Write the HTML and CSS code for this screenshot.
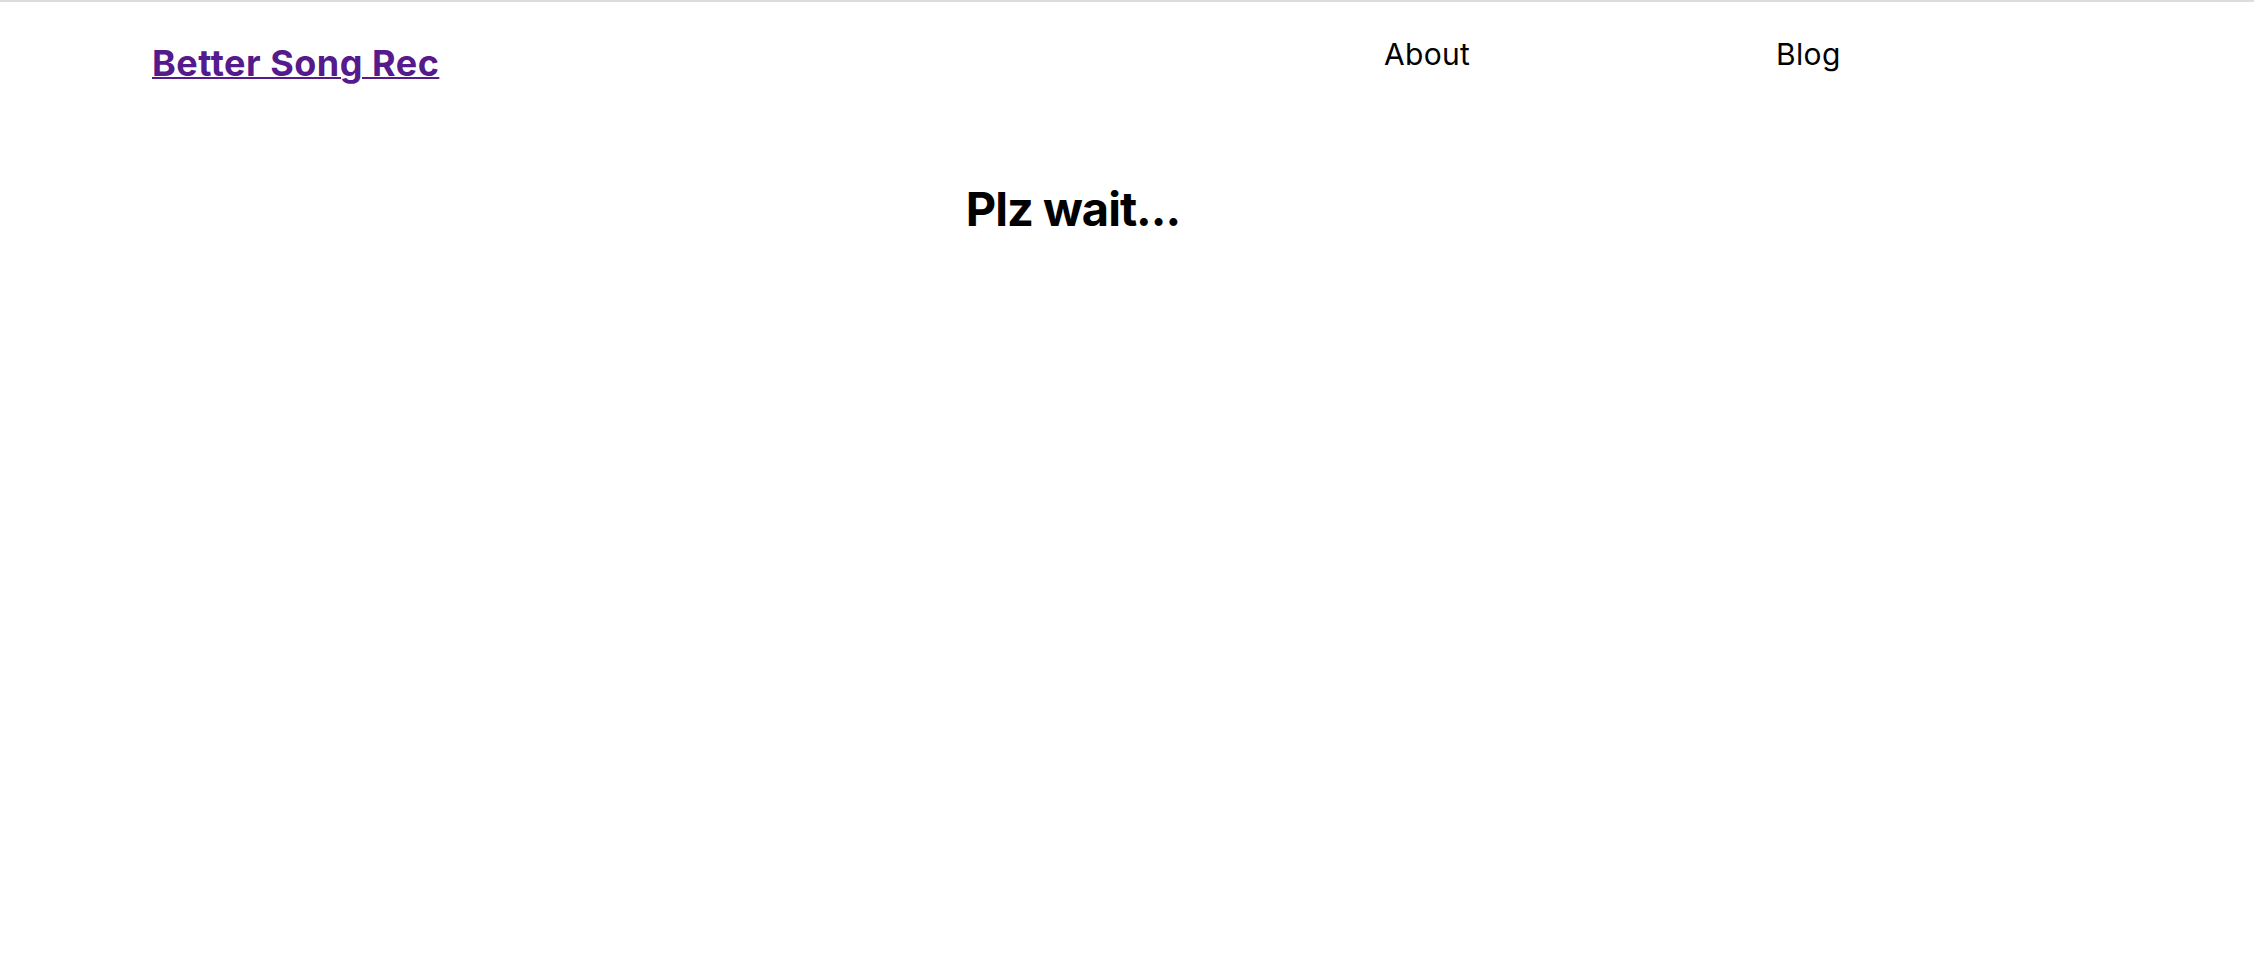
FILE: index.html
```html
<!DOCTYPE html>
<html lang="en">
<head>
<meta charset="utf-8">
<title>Better Song Rec</title>
<link rel="stylesheet" href="styles.css">
</head>
<body>
<header class="topbar">
  <a class="brand" href="#">Better Song Rec</a>
  <nav class="nav">
    <a class="nav-link" href="#">About</a>
    <a class="nav-link" href="#">Blog</a>
  </nav>
</header>
<main class="content">
  <h1 class="wait">Plz wait...</h1>
</main>
</body>
</html>
```
FILE: styles.css
```css
html, body {
  margin: 0;
  padding: 0;
  background: #ffffff;
  font-family: Inter, "Noto Sans", sans-serif;
  color: #000;
}
body {
  border-top: 2px solid #dcdce0;
}
.topbar {
  display: flex;
  align-items: flex-start;
  padding: 0 0 0 152px;
}
.brand {
  font-size: 36px;
  font-weight: 700;
  letter-spacing: 0.5px;
  color: #551a8b;
  text-decoration: underline;
  text-decoration-thickness: 2px;
  line-height: 40px;
  margin-top: 41px;
  width: 290px;
  white-space: nowrap;
}
.nav {
  display: flex;
  margin-left: 942px;
  gap: 306px;
  margin-top: 35px;
}
.nav-link {
  font-size: 30px;
  font-weight: 400;
  letter-spacing: 0.3px;
  color: #000;
  text-decoration: none;
  line-height: 34px;
}
.content {
  text-align: center;
  padding-right: 108px;
}
.wait {
  font-size: 47px;
  font-weight: 700;
  letter-spacing: -1px;
  margin: 0;
  padding-top: 97px;
  line-height: 58px;
}
```
